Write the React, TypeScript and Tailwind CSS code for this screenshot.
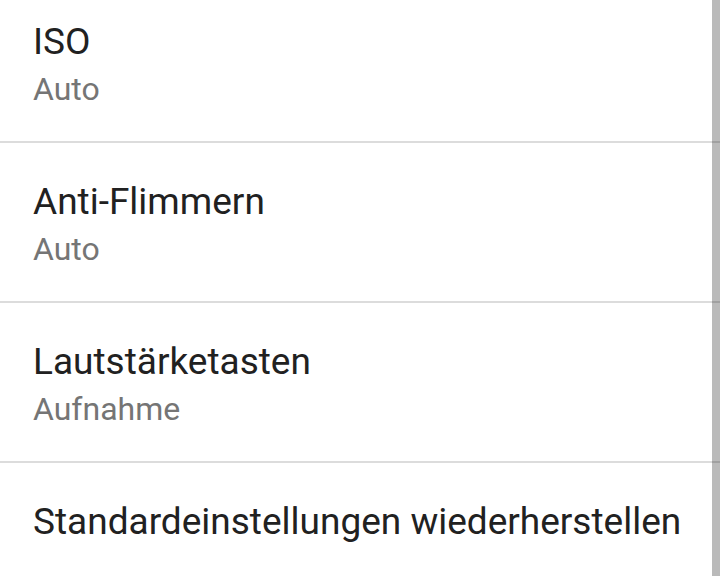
const ITEMS = [
  { title: "ISO", summary: "Auto" },
  { title: "Anti-Flimmern", summary: "Auto" },
  { title: "Lautstärketasten", summary: "Aufnahme" },
  { title: "Standardeinstellungen wiederherstellen" },
];

function PreferenceRow({ title, summary }: { title: string; summary?: string }) {
  return (
    <div className="h-[160px] border-b-2 border-[#dcdcdc] pl-[33px] pt-[37px]">
      <div className="text-[37px] leading-[43px] text-[#212121] whitespace-nowrap">
        {title}
      </div>
      {summary && (
        <div className="mt-[8px] text-[32px] leading-[37px] text-[#757575]">
          {summary}
        </div>
      )}
    </div>
  );
}

export default function App() {
  return (
    <div
      className="relative h-[576px] w-[720px] overflow-hidden bg-white"
      style={{ fontFamily: "Roboto, 'Noto Sans', sans-serif" }}
    >
      <div className="-mt-[17px]">
        {ITEMS.map((item) => (
          <PreferenceRow key={item.title} {...item} />
        ))}
      </div>
      {/* scrollbar */}
      <div className="absolute right-0 top-0 h-full w-[8px] bg-black/[0.27]" />
    </div>
  );
}
